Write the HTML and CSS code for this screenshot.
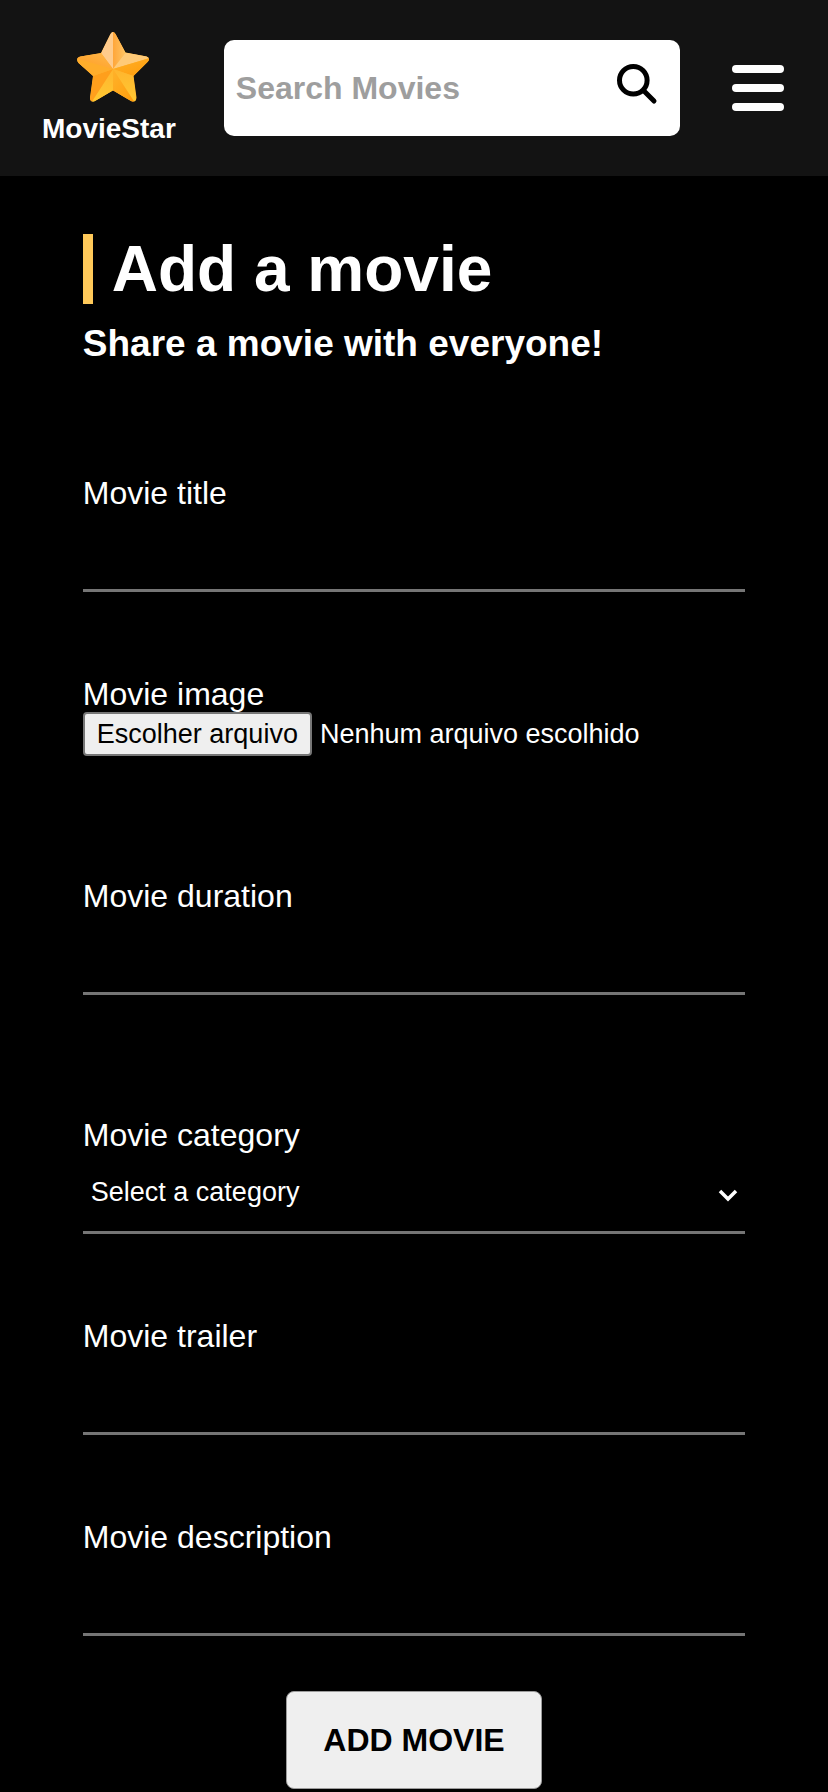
FILE: index.html
```html
<!DOCTYPE html>
<html lang="en">
<head>
  <meta charset="utf-8">
  <meta name="viewport" content="width=device-width, initial-scale=1">
  <title>MovieStar</title>
  <link rel="stylesheet" href="styles.css">
</head>
<body>
  <header class="header">
    <a class="logo" href="#">
      <svg class="logo-star" viewBox="0 0 72 70" aria-hidden="true">
        <defs>
          <clipPath id="star"><path d="M33.500 2Q36 -2 38.500 2L48.500 20.500L69.500 24.500Q74 26.500 70.500 30L56.500 44L59.500 65.500Q59 71 54 69L36 58.500L18 69Q13 71 13 65.500L16 44L1.500 31Q-2 26 3.500 24.500L24 21Z"/></clipPath>
          <linearGradient id="top-right" x1="0" y1="0" x2="1" y2="0"><stop offset="0" stop-color="#ffa63a"/><stop offset="1" stop-color="#ffc463"/></linearGradient>
          <linearGradient id="left-top" x1="0" y1="1" x2="1" y2="0"><stop offset="0" stop-color="#ff9a1e"/><stop offset="1" stop-color="#ffb84c"/></linearGradient>
          <linearGradient id="low-dark" x1="0" y1="0" x2="1" y2="1"><stop offset="0" stop-color="#ffb22a"/><stop offset="1" stop-color="#ff9a08"/></linearGradient>
          <linearGradient id="low-light" x1="0" y1="0" x2="0" y2="1"><stop offset="0" stop-color="#ffb52e"/><stop offset="1" stop-color="#ffcb32"/></linearGradient>
        </defs>
        <g clip-path="url(#star)">
          <path d="M0 0H72V70H0Z" fill="#ffb02e"/>
          <path d="M36 37V-6L24 21Z" fill="#ffcb8c"/>
          <path d="M36 37V-6L48.500 20.500Z" fill="url(#top-right)"/>
          <path d="M36 37L48.500 20.500L78 24.500Z" fill="#ffca78"/>
          <path d="M36 37L78 24.500L56.500 44Z" fill="url(#low-dark)"/>
          <path d="M36 37L56.500 44L60 74Z" fill="url(#low-light)"/>
          <path d="M36 37L60 74L36 58.500Z" fill="url(#low-dark)"/>
          <path d="M36 37V58.500L12 74Z" fill="url(#low-light)"/>
          <path d="M36 37L12 74L16 44Z" fill="#ff9f1c"/>
          <path d="M36 37L16 44L-6 25Z" fill="#ffad2b"/>
          <path d="M36 37L-6 25L24 21Z" fill="url(#left-top)"/>
        </g>
      </svg>
      <span>MovieStar</span>
    </a>
    <form class="search" role="search">
      <input class="search-input" type="search" placeholder="Search Movies" aria-label="Search Movies">
      <button class="search-button" type="submit" aria-label="Search">
        <svg class="search-icon" viewBox="0 0 42 42" fill="none" stroke="#000" stroke-width="5" stroke-linecap="round" aria-hidden="true">
          <circle cx="17.300" cy="17.300" r="13.800"/>
          <path d="M28 28L38 38"/>
        </svg>
      </button>
    </form>
    <button class="menu" type="button" aria-label="Menu">
      <span class="menu-bar"></span>
      <span class="menu-bar"></span>
      <span class="menu-bar"></span>
    </button>
  </header>

  <main class="main">
    <h1 class="title">Add a movie</h1>
    <p class="subtitle">Share a movie with everyone!</p>

    <form class="form">
      <div class="field">
        <label for="title">Movie title</label>
        <input class="control" id="title" type="text">
      </div>
      <div class="field field-file">
        <label for="image">Movie image</label>
        <div class="file">
          <input class="file-input" id="image" type="file">
          <label class="file-button" for="image">Escolher arquivo</label>
          <span class="file-name">Nenhum arquivo escolhido</span>
        </div>
      </div>
      <div class="field field-duration">
        <label for="duration">Movie duration</label>
        <input class="control" id="duration" type="text">
      </div>
      <div class="field">
        <label for="category">Movie category</label>
        <div class="select">
          <select class="control select-input" id="category">
            <option>Select a category</option>
          </select>
          <svg class="select-arrow" viewBox="0 0 20 18" fill="none" stroke="#fff" stroke-width="3.500" aria-hidden="true"><path d="M2 6L10 14L18 6"/></svg>
        </div>
      </div>
      <div class="field">
        <label for="trailer">Movie trailer</label>
        <input class="control" id="trailer" type="text">
      </div>
      <div class="field">
        <label for="description">Movie description</label>
        <input class="control" id="description" type="text">
      </div>
      <button class="submit" type="submit">ADD MOVIE</button>
    </form>
  </main>
</body>
</html>
```

FILE: styles.css
```css
* {
  box-sizing: border-box;
  margin: 0;
  padding: 0;
}

body {
  background: #000;
  color: #fff;
  font-family: "Liberation Sans", Arial, sans-serif;
  font-size: 32px;
  line-height: 36px;
}

input,
select,
button {
  font-family: inherit;
  border: 0;
}

.header {
  display: flex;
  align-items: center;
  gap: 48px;
  min-height: 176px;
  padding: 0 40px 0 42px;
  background: #131313;
}

.logo {
  display: flex;
  flex-direction: column;
  align-items: center;
  gap: 10px;
  padding-top: 2px;
  color: #fff;
  font-size: 28px;
  font-weight: bold;
  line-height: 34px;
  text-decoration: none;
}

.logo-star {
  width: 72px;
  height: 70px;
  margin-left: 8px;
}

.search {
  display: flex;
  align-items: center;
  flex: 1;
  min-width: 0;
  height: 96px;
  padding: 0 22px 0 12px;
  border-radius: 10px;
  background: #fff;
}

.search-input {
  flex: 1;
  min-width: 0;
  height: 100%;
  background: none;
  color: #000;
  font-size: 32px;
  font-weight: bold;
  appearance: none;
}

.search-input::placeholder {
  color: #9e9e9e;
}

.search-button {
  display: flex;
  padding-bottom: 8px;
  background: none;
}

.search-icon {
  width: 42px;
  height: 42px;
}

.menu {
  display: flex;
  flex-direction: column;
  gap: 11px;
  padding: 0 4px;
  background: none;
}

.menu-bar {
  width: 52px;
  height: 8px;
  border-radius: 4px;
  background: #fff;
}

.main {
  padding: 58px 10% 0;
}

.title {
  padding-left: 19px;
  border-left: 10px solid #ffc959;
  font-size: 64px;
  line-height: 70px;
}

.subtitle {
  margin-top: 18px;
  font-size: 37px;
  font-weight: bold;
  line-height: 44px;
}

.form {
  display: flex;
  flex-direction: column;
  gap: 84px;
  margin-top: 109px;
}

.field {
  display: flex;
  flex-direction: column;
}

.field-file,
.field-duration {
  margin-bottom: 38px;
}

.control {
  width: 100%;
  height: 81px;
  border-bottom: 3px solid #757575;
  background: #000;
  color: #fff;
  font-size: 27px;
}

.file {
  display: flex;
  align-items: center;
  gap: 8px;
  position: relative;
  font-size: 27px;
}

.file-input {
  position: absolute;
  width: 1px;
  height: 1px;
  opacity: 0;
}

.file-button {
  padding: 3px 12px;
  border: 2px solid #767676;
  border-radius: 4px;
  background: #efefef;
  color: #000;
  line-height: 34px;
}

.select {
  display: grid;
  align-items: center;
  position: relative;
}

.select-input {
  padding: 0 40px 0 8px;
  appearance: none;
}

.select-arrow {
  position: absolute;
  right: 7px;
  width: 20px;
  height: 18px;
  pointer-events: none;
}

.submit {
  align-self: center;
  height: 98px;
  margin-top: -29px;
  padding: 0 36px;
  border: 1px solid #9b9b9b;
  border-radius: 8px;
  background: #efefef;
  color: #000;
  font-size: 32px;
  font-weight: bold;
}
```
